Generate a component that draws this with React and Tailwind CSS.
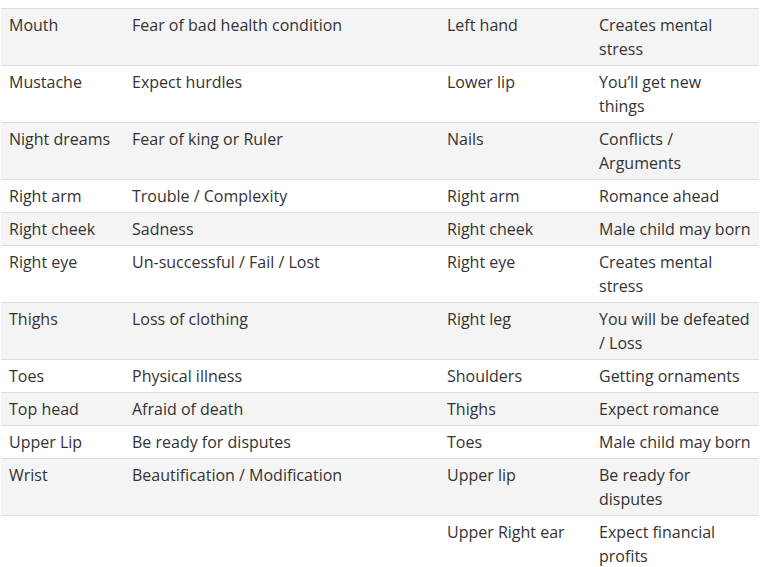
import React from "react";

const rows = [
  ["Mouth", "Fear of bad health condition", "Left hand", "Creates mental stress"],
  ["Mustache", "Expect hurdles", "Lower lip", "You’ll get new\nthings"],
  ["Night dreams", "Fear of king or Ruler", "Nails", "Conflicts / Arguments"],
  ["Right arm", "Trouble / Complexity", "Right arm", "Romance ahead"],
  ["Right cheek", "Sadness", "Right cheek", "Male child may born"],
  ["Right eye", "Un-successful / Fail / Lost", "Right eye", "Creates mental stress"],
  ["Thighs", "Loss of clothing", "Right leg", "You will be defeated / Loss"],
  ["Toes", "Physical illness", "Shoulders", "Getting ornaments"],
  ["Top head", "Afraid of death", "Thighs", "Expect romance"],
  ["Upper Lip", "Be ready for disputes", "Toes", "Male child may born"],
  ["Wrist", "Beautification / Modification", "Upper lip", "Be ready for disputes"],
  ["", "", "Upper Right ear", "Expect financial profits"],
];

export default function App() {
  return (
    <div className="bg-white pt-2 pl-px w-[766px] h-[567px] overflow-hidden font-['Open_Sans',sans-serif] text-[16px] leading-6 text-[#333]">
      <table className="table-fixed border-collapse w-[758px]">
        <colgroup>
          <col className="w-[123px]" />
          <col className="w-[315px]" />
          <col className="w-[152px]" />
          <col className="w-[168px]" />
        </colgroup>
        <tbody>
          {rows.map((row, idx) => (
            <tr
              key={idx}
              className={
                idx % 2 === 0
                  ? "bg-[#f4f4f4] border-t border-[#dddddd]"
                  : "bg-white border-t border-[#dddddd]"
              }
            >
              {row.map((cell, i) => (
                <td key={i} className="align-top px-2 py-1 whitespace-pre-line">
                  {cell}
                </td>
              ))}
            </tr>
          ))}
        </tbody>
      </table>
    </div>
  );
}
